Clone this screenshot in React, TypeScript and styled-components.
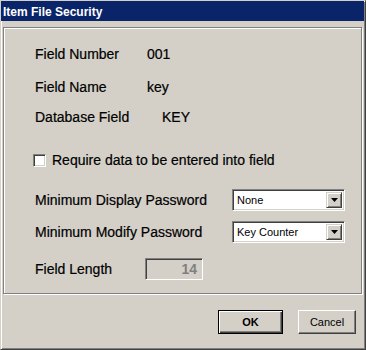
import React from "react";
import styled, { createGlobalStyle } from "styled-components";

const Global = createGlobalStyle`
  html, body { margin: 0; padding: 0; background: #d4d0c8; }
  body { font-family: "Liberation Sans", Arial, sans-serif; }
  * { box-sizing: border-box; }
`;

const Window = styled.div`
  width: 366px;
  height: 350px;
  background: #d4d0c8;
  border-style: solid;
  border-width: 1px;
  border-color: #d4d0c8 #404040 #404040 #d4d0c8;
  box-shadow: inset 1px 1px 0 #ffffff, inset -1px -1px 0 #808080;
  display: flex;
  flex-direction: column;
`;

const TitleBar = styled.div`
  height: 20px;
  margin-right: 1px;
  background: #0a246a;
  color: #ffffff;
  font-family: "Liberation Sans", Arial, sans-serif;
  font-weight: bold;
  font-size: 12px;
  display: flex;
  align-items: center;
  padding-left: 2px;
  padding-top: 1px;
`;

const Body = styled.div`
  padding: 6px 2px 0 2px;
  display: flex;
  flex-direction: column;
`;

const GroupBox = styled.div`
  width: 359px;
  height: 267px;
  border: 1px solid #808080;
  box-shadow: 1px 1px 0 #ffffff, inset 1px 1px 0 #ffffff;
  padding: 16px 0 0 31px;
  display: flex;
  flex-direction: column;
`;

const Row = styled.div<{ $top: number; $h: number }>`
  margin-top: ${(p) => p.$top}px;
  height: ${(p) => p.$h}px;
  display: flex;
  align-items: center;
  font-size: 14px;
  color: #000;
`;

const Label = styled.span<{ $w: number }>`
  width: ${(p) => p.$w}px;
  flex: none;
  white-space: nowrap;
  -webkit-text-stroke: 0.2px #000;
`;

const Value = styled.span`
  white-space: nowrap;
  -webkit-text-stroke: 0.2px #000;
`;

const CheckBox = styled.span`
  width: 13px;
  height: 13px;
  margin-left: -2px;
  margin-right: 6px;
  background: #ffffff;
  border-style: solid;
  border-width: 1px;
  border-color: #808080 #ffffff #ffffff #808080;
  box-shadow: inset 1px 1px 0 #404040, inset -1px -1px 0 #d4d0c8;
  flex: none;
`;

const Combo = styled.div`
  width: 113px;
  height: 22px;
  background: #ffffff;
  border-style: solid;
  border-width: 1px;
  border-color: #808080 #ffffff #ffffff #808080;
  box-shadow: inset 1px 1px 0 #404040, inset -1px -1px 0 #d4d0c8;
  padding: 2px;
  display: flex;
  align-items: stretch;
`;

const ComboText = styled.span`
  flex: 1;
  font-size: 11px;
  padding-left: 2px;
  display: flex;
  align-items: center;
  white-space: nowrap;
`;

const DropButton = styled.span`
  width: 16px;
  flex: none;
  background: #d4d0c8;
  border-style: solid;
  border-width: 1px;
  border-color: #d4d0c8 #404040 #404040 #d4d0c8;
  box-shadow: inset 1px 1px 0 #ffffff, inset -1px -1px 0 #808080;
  display: flex;
  align-items: center;
  justify-content: center;
`;

const TextBox = styled.div`
  width: 58px;
  height: 22px;
  background: #d4d0c8;
  border-style: solid;
  border-width: 1px;
  border-color: #808080 #ffffff #ffffff #808080;
  box-shadow: inset 1px 1px 0 #404040, inset -1px -1px 0 #d4d0c8;
  display: flex;
  align-items: center;
  justify-content: flex-end;
  padding-right: 5px;
  font-size: 14px;
  font-weight: bold;
  color: #808080;
`;

const ButtonRow = styled.div`
  margin-top: 16px;
  display: flex;
  padding-left: 215px;
  gap: 15px;
`;

const Button = styled.button<{ $default?: boolean; $w: number }>`
  width: ${(p) => p.$w}px;
  height: 24px;
  padding: 0;
  background: #d4d0c8;
  font-family: "Liberation Sans", Arial, sans-serif;
  font-size: 11px;
  font-weight: ${(p) => (p.$default ? "bold" : "normal")};
  color: #000;
  border-style: solid;
  border-width: 1px;
  border-color: ${(p) => (p.$default ? "#000000" : "#ffffff #404040 #404040 #ffffff")};
  box-shadow: ${(p) =>
    p.$default
      ? "inset 1px 1px 0 #ffffff, inset -1px -1px 0 #404040, inset -2px -2px 0 #808080"
      : "inset -1px -1px 0 #808080"};
`;

const Arrow = () => (
  <svg width="7" height="4" viewBox="0 0 7 4">
    <path d="M0 0h7L3.5 4z" fill="#000" />
  </svg>
);

export default function App() {
  return (
    <>
      <Global />
      <Window>
        <TitleBar>Item File Security</TitleBar>
        <Body>
          <GroupBox>
            <Row $top={0} $h={20}>
              <Label $w={112}>Field Number</Label>
              <Value>001</Value>
            </Row>
            <Row $top={13} $h={20}>
              <Label $w={112}>Field Name</Label>
              <Value>key</Value>
            </Row>
            <Row $top={10} $h={20}>
              <Label $w={127}>Database Field</Label>
              <Value>KEY</Value>
            </Row>
            <Row $top={23} $h={20}>
              <CheckBox />
              <Value>Require data to be entered into field</Value>
            </Row>
            <Row $top={19} $h={22}>
              <Label $w={197}>Minimum Display Password</Label>
              <Combo>
                <ComboText>None</ComboText>
                <DropButton>
                  <Arrow />
                </DropButton>
              </Combo>
            </Row>
            <Row $top={10} $h={22}>
              <Label $w={197}>Minimum Modify Password</Label>
              <Combo>
                <ComboText>Key Counter</ComboText>
                <DropButton>
                  <Arrow />
                </DropButton>
              </Combo>
            </Row>
            <Row $top={15} $h={22}>
              <Label $w={110}>Field Length</Label>
              <TextBox>14</TextBox>
            </Row>
          </GroupBox>
          <ButtonRow>
            <Button $default $w={65}>OK</Button>
            <Button $w={58}>Cancel</Button>
          </ButtonRow>
        </Body>
      </Window>
    </>
  );
}
